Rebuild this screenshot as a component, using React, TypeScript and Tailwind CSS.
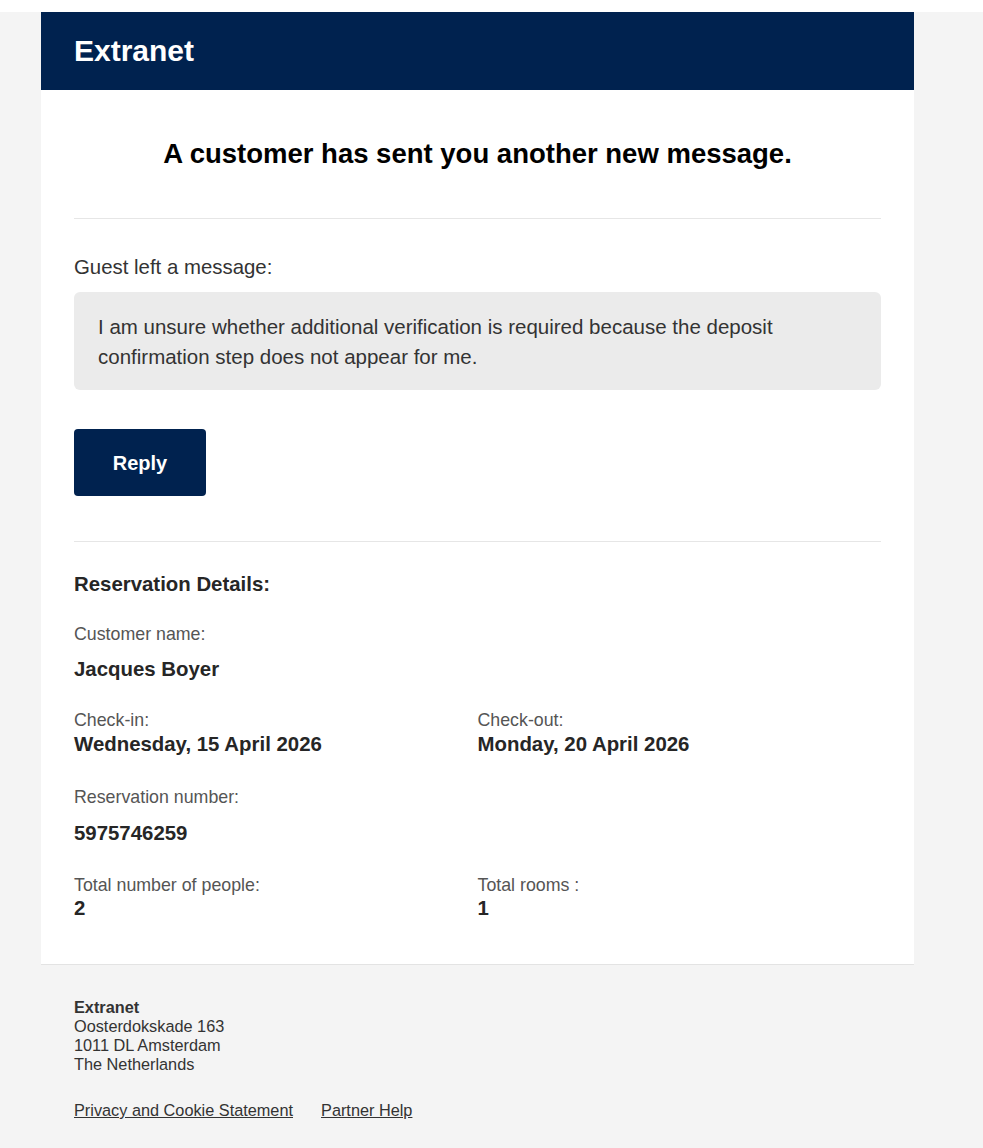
const Divider = () => <div className="h-px bg-[#e6e6e6]" />

type DetailProps = { label: string; value: string; gap?: string }

const Detail = ({ label, value, gap = 'mt-px' }: DetailProps) => (
  <div>
    <p className="text-[17.8px] leading-[21px] text-[#555555]">{label}</p>
    <p className={`${gap} text-[20.4px] font-bold leading-[24px] text-[#262626]`}>{value}</p>
  </div>
)

const App = () => {
  return (
    <div className="min-h-[1148px] bg-[#f4f4f4] font-['Liberation_Sans',Arial,sans-serif] text-[#262626]">
      <div className="h-[12px] bg-white" />
      <div className="ml-[41px] w-[873px]">
        <div className="flex h-[78px] items-center bg-[#00224f] px-[33px]">
          <h1 className="text-[30px] font-bold leading-[34px] text-white">Extranet</h1>
        </div>

        <div className="border-b border-[#e3e3e3] bg-white px-[33px] pb-[44px] pt-[49px]">
          <h2 className="text-center text-[27.5px] font-bold leading-[30px] text-black">
            A customer has sent you another new message.
          </h2>
          <div className="mt-[49px]">
            <Divider />
          </div>

          <p className="mt-[36px] text-[20.4px] leading-[24px] text-[#333333]">Guest left a message:</p>
          <div className="mt-[13px] rounded-[6px] bg-[#ebebeb] px-[24px] pb-[18px] pt-[20px] text-[20.5px] leading-[30px] text-[#333333]">
            I am unsure whether additional verification is required because the deposit
            <br />
            confirmation step does not appear for me.
          </div>

          <button className="mt-[39px] flex h-[67px] w-[132px] items-center justify-center rounded-[4px] bg-[#00224f] text-[20px] font-bold text-white">
            Reply
          </button>

          <div className="mt-[45px]">
            <Divider />
          </div>

          <h3 className="mt-[30px] text-[20.4px] font-bold leading-[24px] text-[#262626]">
            Reservation Details:
          </h3>

          <div className="mt-[28px]">
            <Detail label="Customer name:" value="Jacques Boyer" gap="mt-[12px]" />
          </div>

          <div className="mt-[29px] grid grid-cols-2">
            <Detail label="Check-in:" value="Wednesday, 15 April 2026" />
            <Detail label="Check-out:" value="Monday, 20 April 2026" />
          </div>

          <div className="mt-[31px]">
            <Detail label="Reservation number:" value="5975746259" gap="mt-[13px]" />
          </div>

          <div className="mt-[30px] grid grid-cols-2">
            <Detail label="Total number of people:" value="2" gap="mt-0" />
            <Detail label="Total rooms :" value="1" gap="mt-0" />
          </div>
        </div>

        <footer className="px-[33px] pb-[28px] pt-[33px] text-[16.3px] leading-[19px] text-[#333333]">
          <p className="font-bold">Extranet</p>
          <p>Oosterdokskade 163</p>
          <p>1011 DL Amsterdam</p>
          <p>The Netherlands</p>
          <div className="mt-[27px] flex gap-[28px]">
            <a href="#" className="underline">Privacy and Cookie Statement</a>
            <a href="#" className="underline">Partner Help</a>
          </div>
        </footer>
      </div>
    </div>
  )
}

export default App
